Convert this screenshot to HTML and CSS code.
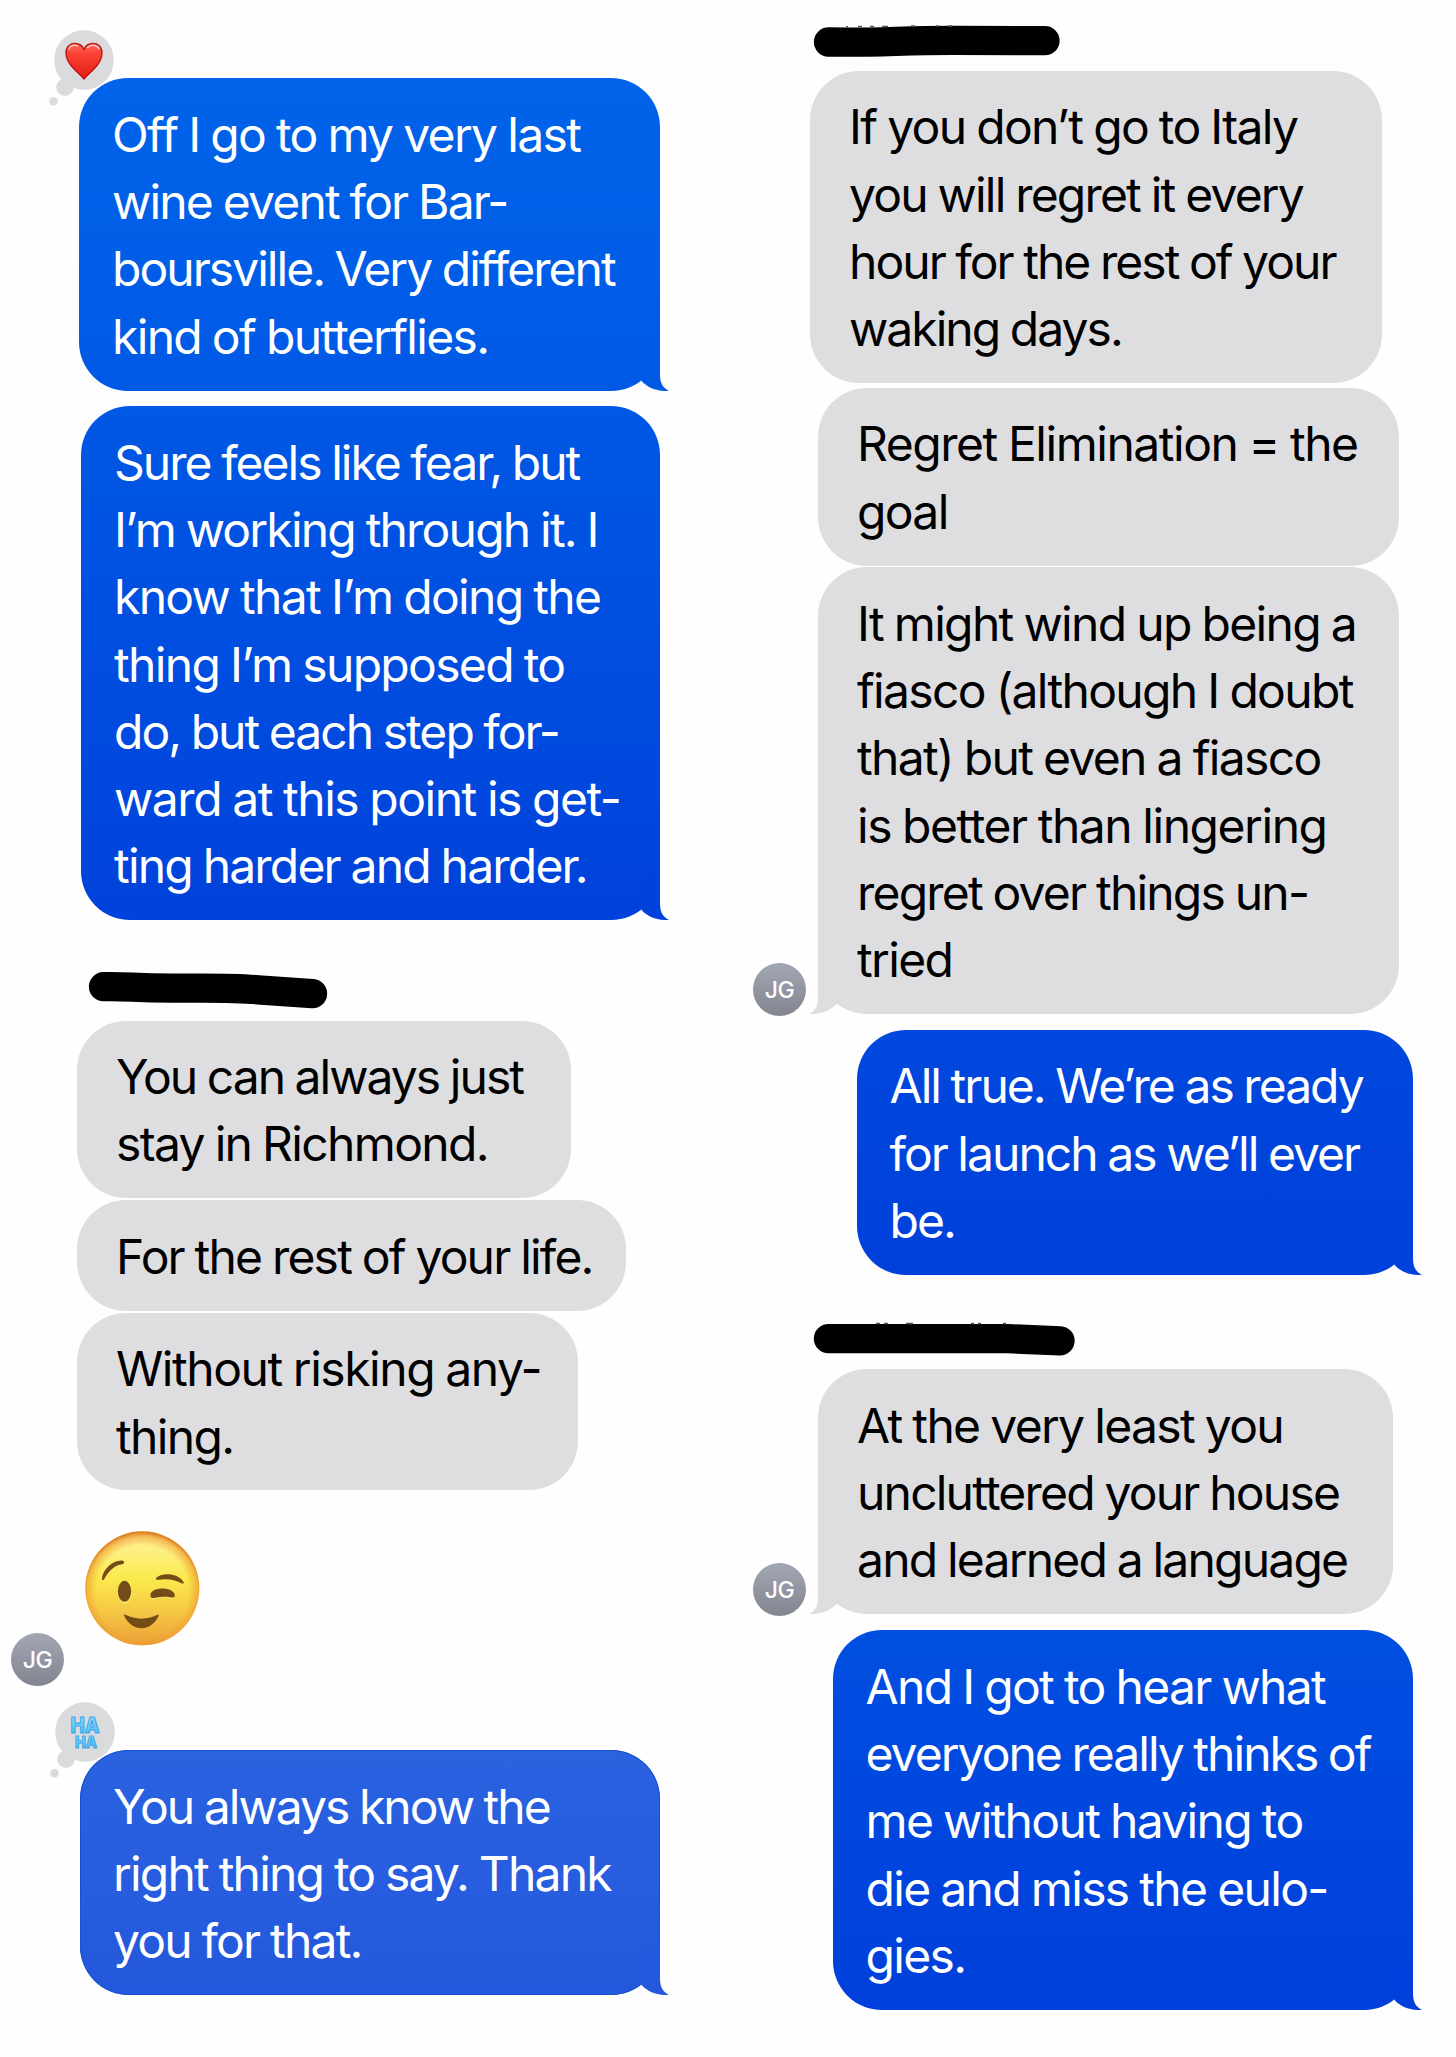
FILE: index.html
```html
<!DOCTYPE html>
<html lang="en">
<head>
    <meta charset="UTF-8">
    <meta name="viewport" content="width=device-width, initial-scale=1.0">
    <title>Messages</title>
    <link rel="stylesheet" href="styles.css">
</head>
<body>
    <!-- shapes shared by several messages -->
    <svg class="defs" width="0" height="0">
        <symbol id="tail" viewBox="0 0 60 60">
            <path d="M51 6V44C51 52 54 57 60 60C48 60.5 39 57 32.5 50L28 20Z"/>
        </symbol>
        <symbol id="thought" viewBox="0 0 66 78">
            <circle cx="35" cy="30" r="29.8"/>
            <circle cx="16" cy="57.2" r="8.7"/>
            <circle cx="4.5" cy="71.3" r="4.3"/>
        </symbol>
    </svg>

    <div class="chat">
        <div class="column left">
            <div class="bubble sent b1">
                <span>Off I go to my very last</span>
                <span class="snug">wine event for Bar-</span>
                <span class="tight">boursville. Very different</span>
                <span>kind of butterflies.</span>
                <svg class="tail"><use href="#tail"/></svg>
                <div class="tapback">
                    <svg width="66" height="78">
                        <defs>
                            <linearGradient id="heart" x1="0" y1="0" x2="0" y2="1">
                                <stop offset="0" stop-color="#ff6a5c"/>
                                <stop offset="0.3" stop-color="#fb4135"/>
                                <stop offset="1" stop-color="#e31d15"/>
                            </linearGradient>
                        </defs>
                        <use href="#thought"/>
                        <path d="M35 49C29 42 17 34 17 23C17 16.500 21.500 13.500 26 13.500C30.500 13.500 33.500 16 35 19.500C36.500 16 39.500 13.500 44 13.500C48.500 13.500 53 16.500 53 23C53 34 41 42 35 49Z" fill="url(#heart)" stroke="#bd1410" stroke-width="1.300"/>
                        <path d="M20 19C21 15.500 25 14.500 28 15.800M38.500 17.500C41 14.500 47 14 50 18.500" fill="none" stroke="#ffc9c2" stroke-width="1.600" stroke-linecap="round"/>
                    </svg>
                </div>
            </div>
            <div class="bubble sent b2">
                <span class="tight">Sure feels like fear, but</span>
                <span class="snug">I’m working through it. I</span>
                <span>know that I’m doing the</span>
                <span>thing I’m supposed to</span>
                <span class="tight">do, but each step for-</span>
                <span class="loose">ward at this point is get-</span>
                <span class="snug">ting harder and harder.</span>
                <svg class="tail"><use href="#tail"/></svg>
            </div>

            <svg class="name name-1" width="250" height="38">
                <path d="M20.500 15.700C45 15 50 17.300 90 17.200S150 16.500 175 18.800L229.500 22.700"/>
            </svg>
            <div class="bubble received b3">
                <span class="tight">You can always just</span>
                <span>stay in Richmond.</span>
            </div>
            <div class="bubble received b4">
                <span class="snug">For the rest of your life.</span>
            </div>
            <div class="bubble received b5">
                <span class="loose">Without risking any-</span>
                <span>thing.</span>
            </div>
            <div class="emoji-row">
                <div class="avatar">JG</div>
                <svg class="wink" width="115" height="115" viewBox="0 0 115 115">
                    <defs>
                        <linearGradient id="face" x1="0" y1="0" x2="0" y2="1">
                            <stop offset="0" stop-color="#fdee9a"/>
                            <stop offset="0.2" stop-color="#fcf07c"/>
                            <stop offset="0.42" stop-color="#fbe94c"/>
                            <stop offset="0.7" stop-color="#f6c845"/>
                            <stop offset="1" stop-color="#ec9f36"/>
                        </linearGradient>
                        <radialGradient id="rim" cx="0.5" cy="0.53" r="0.52">
                            <stop offset="0.78" stop-color="#ee9a2e" stop-opacity="0"/>
                            <stop offset="0.93" stop-color="#ee9a2e" stop-opacity="0.6"/>
                            <stop offset="1" stop-color="#de7f26"/>
                        </radialGradient>
                    </defs>
                    <circle cx="57.300" cy="57.300" r="57" fill="url(#face)"/>
                    <circle cx="57.300" cy="57.300" r="57" fill="url(#rim)"/>
                    <g fill="#fbe565" transform="translate(0 1.200)">
                        <ellipse cx="39.500" cy="60.500" rx="7.300" ry="11"/>
                        <path d="M66 64C67 56 87 55 89.500 64C90 67 87.500 67 85 66.300C80 64.800 75 65 70.500 66.800C67 68 65.500 67 66 64Z"/>
                    </g>
                    <g fill="#744c16">
                        <ellipse cx="39.500" cy="60.300" rx="6.700" ry="10.500"/>
                        <path d="M65.500 63.500C67 55.500 87.500 55.500 89.700 63.500C90 67 88 66.700 85 66.300C80 65.500 75 65.700 70.500 66.800C67 67.500 65 67 65.500 63.500Z"/>
                        <path d="M17 47C18 38 28 29 37 29.500C40 30 39.500 33 37.500 33.200C29 34 24 40 19.500 47.500C18.500 50 16.500 49.500 17 47Z"/>
                        <path d="M71 47C76 41.500 93 41.500 98.500 51C99 53 98 53 96.500 52.300C89 48 81 47.500 73.500 48.800C71 49 70.500 48 71 47Z"/>
                        <path d="M40 83.500C50 89 63 89 73 83.500C74 83.500 73.700 84.500 73.300 85.500C66 101 47 101 39.500 85.500C39 84 39 83 40 83.500Z"/>
                    </g>
                </svg>
            </div>

            <div class="bubble sent b6">
                <span class="tight">You always know the</span>
                <span class="snug">right thing to say. Thank</span>
                <span class="snug">you for that.</span>
                <svg class="tail"><use href="#tail"/></svg>
                <div class="tapback">
                    <svg width="66" height="78">
                        <defs>
                            <linearGradient id="haha" x1="0" y1="0" x2="0" y2="1">
                                <stop offset="0" stop-color="#9be2fc"/>
                                <stop offset="1" stop-color="#45b8f6"/>
                            </linearGradient>
                        </defs>
                        <use href="#thought"/>
                        <g class="haha">
                            <text x="35" y="31" font-size="21" textLength="29" lengthAdjust="spacingAndGlyphs">HA</text>
                            <text x="36" y="46" font-size="16" textLength="22" lengthAdjust="spacingAndGlyphs">HA</text>
                        </g>
                    </svg>
                </div>
            </div>
        </div>

        <div class="column right">
            <svg class="name name-2" width="270" height="34">
                <path d="M22.500 17C70 18 100 15 150 15.300L239 15.700"/>
                <path class="specks" d="M40 1.800h2M52 1.500h4M64 1.500h4M76 1.500h6M105 1h4M130 1h3M142 1h4"/>
            </svg>
            <div class="bubble received b7">
                <span>If you don’t go to Italy</span>
                <span class="snug">you will regret it every</span>
                <span class="tight">hour for the rest of your</span>
                <span class="tight">waking days.</span>
            </div>
            <div class="bubble received b8">
                <span class="loose">Regret Elimination = the</span>
                <span>goal</span>
            </div>
            <div class="row">
                <div class="avatar">JG</div>
                <div class="bubble received b9">
                    <span>It might wind up being a</span>
                    <span>fiasco (although I doubt</span>
                    <span>that) but even a fiasco</span>
                    <span class="loose">is better than lingering</span>
                    <span class="snug">regret over things un-</span>
                    <span>tried</span>
                    <svg class="tail"><use href="#tail"/></svg>
                </div>
            </div>
            <div class="bubble sent b10">
                <span class="tight">All true. We’re as ready</span>
                <span class="tight">for launch as we’ll ever</span>
                <span class="tight">be.</span>
                <svg class="tail"><use href="#tail"/></svg>
            </div>

            <svg class="name name-3" width="280" height="36">
                <path d="M22.500 16.700H202L254 18.800"/>
                <path class="specks" d="M70 1.500h4M78 1.500h4M100 1.500h7M165 1.500h3M172 1.500h3M197 1.500h3"/>
            </svg>
            <div class="row">
                <div class="avatar">JG</div>
                <div class="bubble received b11">
                    <span>At the very least you</span>
                    <span class="snug">uncluttered your house</span>
                    <span class="snug">and learned a language</span>
                    <svg class="tail"><use href="#tail"/></svg>
                </div>
            </div>
            <div class="bubble sent b12">
                <span>And I got to hear what</span>
                <span class="tight">everyone really thinks of</span>
                <span>me without having to</span>
                <span>die and miss the eulo-</span>
                <span>gies.</span>
                <svg class="tail"><use href="#tail"/></svg>
            </div>
        </div>
    </div>
</body>
</html>
```

FILE: styles.css
```css
* {
    box-sizing: border-box;
}
body {
    margin: 0;
    background: #fefefe;
    font-family: Inter, "Liberation Sans", sans-serif;
}
.defs {
    position: absolute;
}
.chat {
    display: flex;
    width: 1456px;
    height: 2057px;
    overflow: hidden;
}
.column {
    display: flex;
    flex-direction: column;
    align-items: flex-start;
}
.left {
    width: 660px;
    padding: 78.4px 0 0 11px;
}
.right {
    width: 752.5px;
    padding: 25px 0 0 93px;
}

/* bubbles */
.bubble {
    position: relative;
    padding: 22.6px 0 20.6px 39px;
    border-radius: 49px;
    font-size: 48px;
    line-height: 67.25px;
    letter-spacing: -1.67px;
    word-spacing: -1px;
    white-space: nowrap;
}
.bubble span {
    display: block;
}
.bubble .loose {
    letter-spacing: -1.45px;
}
.bubble .snug {
    letter-spacing: -1.8px;
}
.bubble .tight {
    letter-spacing: -1.96px;
}
.sent {
    align-self: flex-end;
    padding-left: 33px;
    color: #fff;
}
.received {
    margin-left: 66px;
    background: #dedee0;
    color: #000;
}
.right .received {
    margin-left: 65px;
}
.tail {
    position: absolute;
    right: -9px;
    bottom: 0;
    width: 60px;
    height: 60px;
    fill: var(--tail);
}
.received .tail {
    right: auto;
    left: -9px;
    transform: scaleX(-1);
    fill: #dedee0;
}

.b1 {
    --tail: #0059e5;
    width: 581px;
    background: linear-gradient(#0063e9, #0059e5);
}
.b2 {
    --tail: #0042db;
    width: 579px;
    margin-top: 15.6px;
    background: linear-gradient(#0058e4, #0042db);
}
.b3 {
    width: 494px;
    margin-top: 11.5px;
}
.b4 {
    width: 549px;
    margin-top: 2px;
}
.b5 {
    width: 501px;
    margin-top: 2px;
}
.b6 {
    --tail: #2458dc;
    width: 580px;
    margin-top: 64px;
    background: linear-gradient(#2a62e0, #2458dc);
    box-shadow: inset 0 0 0 1px #1a4fd2;
}
.b7 {
    width: 572px;
    margin-top: 11.7px;
}
.right .b7 {
    margin-left: 57px;
}
.b8 {
    width: 581px;
    margin-top: 5px;
}
.b9 {
    width: 581px;
}
.b10 {
    --tail: #0040db;
    width: 556px;
    margin-top: 16px;
    background: linear-gradient(#0048de, #0040db);
}
.b11 {
    width: 574.5px;
}
.b12 {
    --tail: #003fdb;
    width: 580px;
    margin-top: 16px;
    background: linear-gradient(#004fe1, #003fdb);
}

/* sender */
.row {
    display: flex;
    align-items: flex-end;
    margin-top: 1.6px;
}
.name-3 + .row {
    margin-top: 11px;
}
.row .received,
.right .row .received {
    margin-left: 12px;
}
.avatar {
    width: 53px;
    height: 53px;
    margin-bottom: -2px;
    border-radius: 50%;
    background: linear-gradient(#a2a7b4, #82858f);
    color: #fff;
    font-size: 23px;
    font-weight: 500;
    line-height: 55px;
    text-align: center;
    letter-spacing: -0.5px;
}
.emoji-row {
    display: flex;
    align-items: flex-end;
    gap: 21px;
    height: 155px;
    margin-top: 40.6px;
}
.emoji-row .avatar {
    margin-bottom: 0;
}
.wink {
    align-self: flex-start;
}
.name {
    display: block;
    fill: none;
    stroke: #000;
    stroke-width: 29.3px;
    stroke-linecap: round;
    stroke-linejoin: round;
}
.name .specks {
    stroke: #555;
    stroke-width: 1.5px;
    stroke-linecap: butt;
}
.name-1 {
    margin: 51px 0 0 72px;
}
.name-2 {
    margin-left: 53px;
}
.name-3 {
    margin: 47.5px 0 0 53px;
}

/* tapbacks */
.tapback {
    position: absolute;
    top: -48px;
    left: -30px;
    line-height: 0;
    fill: #dbdbdd;
}
.haha {
    fill: url(#haha);
    stroke: #3aa9ea;
    stroke-width: 1.2px;
    stroke-linejoin: round;
    font-weight: 800;
    letter-spacing: 0;
    text-anchor: middle;
}
```
